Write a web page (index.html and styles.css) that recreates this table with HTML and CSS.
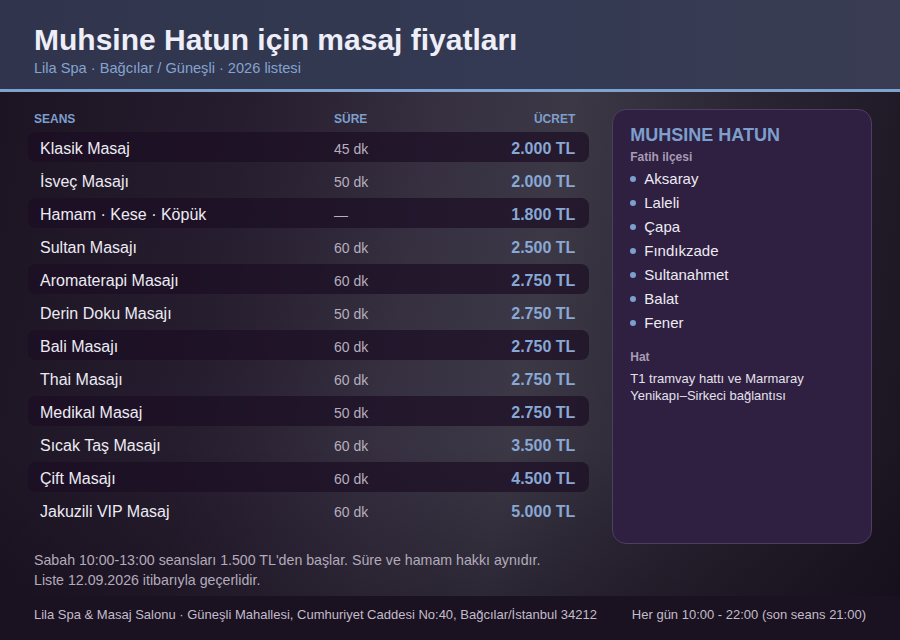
FILE: index.html
```html
<!DOCTYPE html>
<html lang="tr">
<head>
<meta charset="utf-8">
<title>Muhsine Hatun için masaj fiyatları</title>
<link rel="stylesheet" href="styles.css">
</head>
<body>
<div class="page">
  <header class="top">
    <h1 class="title">Muhsine Hatun için masaj fiyatları</h1>
    <div class="subtitle">Lila Spa · Bağcılar / Güneşli · 2026 listesi</div>
  </header>
  <main class="main">
    <div class="content">
      <section class="prices">
        <div class="thead">
          <span>SEANS</span><span>SÜRE</span><span class="r">ÜCRET</span>
        </div>
        <div class="row alt"><span class="name">Klasik Masaj</span><span class="dur">45 dk</span><span class="price">2.000 TL</span></div>
        <div class="row"><span class="name">İsveç Masajı</span><span class="dur">50 dk</span><span class="price">2.000 TL</span></div>
        <div class="row alt"><span class="name">Hamam · Kese · Köpük</span><span class="dur">—</span><span class="price">1.800 TL</span></div>
        <div class="row"><span class="name">Sultan Masajı</span><span class="dur">60 dk</span><span class="price">2.500 TL</span></div>
        <div class="row alt"><span class="name">Aromaterapi Masajı</span><span class="dur">60 dk</span><span class="price">2.750 TL</span></div>
        <div class="row"><span class="name">Derin Doku Masajı</span><span class="dur">50 dk</span><span class="price">2.750 TL</span></div>
        <div class="row alt"><span class="name">Bali Masajı</span><span class="dur">60 dk</span><span class="price">2.750 TL</span></div>
        <div class="row"><span class="name">Thai Masajı</span><span class="dur">60 dk</span><span class="price">2.750 TL</span></div>
        <div class="row alt"><span class="name">Medikal Masaj</span><span class="dur">50 dk</span><span class="price">2.750 TL</span></div>
        <div class="row"><span class="name">Sıcak Taş Masajı</span><span class="dur">60 dk</span><span class="price">3.500 TL</span></div>
        <div class="row alt"><span class="name">Çift Masajı</span><span class="dur">60 dk</span><span class="price">4.500 TL</span></div>
        <div class="row"><span class="name">Jakuzili VIP Masaj</span><span class="dur">60 dk</span><span class="price">5.000 TL</span></div>
      </section>
      <aside class="card">
        <h2 class="card-title">MUHSINE HATUN</h2>
        <div class="label">Fatih ilçesi</div>
        <ul class="places">
          <li>Aksaray</li>
          <li>Laleli</li>
          <li>Çapa</li>
          <li>Fındıkzade</li>
          <li>Sultanahmet</li>
          <li>Balat</li>
          <li>Fener</li>
        </ul>
        <div class="label hat">Hat</div>
        <p class="line">T1 tramvay hattı ve Marmaray Yenikapı–Sirkeci bağlantısı</p>
      </aside>
    </div>
    <div class="notes">
      <p>Sabah 10:00-13:00 seansları 1.500 TL'den başlar. Süre ve hamam hakkı aynıdır.</p>
      <p>Liste 12.09.2026 itibarıyla geçerlidir.</p>
    </div>
  </main>
  <footer class="foot">
    <span>Lila Spa &amp; Masaj Salonu · Güneşli Mahallesi, Cumhuriyet Caddesi No:40, Bağcılar/İstanbul 34212</span>
    <span>Her gün 10:00 - 22:00 (son seans 21:00)</span>
  </footer>
</div>
</body>
</html>
```

FILE: styles.css
```css
* { box-sizing: border-box; }
html, body { margin: 0; padding: 0; }
body {
  width: 900px;
  height: 640px;
  overflow: hidden;
  font-family: "Liberation Sans", Arial, sans-serif;
  background: #1b1322;
}
.page {
  width: 900px;
  height: 640px;
  display: flex;
  flex-direction: column;
}
.top {
  height: 92px;
  padding: 22px 34px 0;
  background: linear-gradient(90deg, #30354d 0%, #343a53 60%, #393c52 100%);
  border-bottom: 3px solid #7fa3d0;
}
.title {
  margin: 0;
  font-size: 30px;
  line-height: 36px;
  font-weight: 700;
  color: #eeeef9;
}
.subtitle {
  margin-top: 1px;
  font-size: 14.6px;
  line-height: 18px;
  color: #86a3cf;
}
.main {
  flex: 1;
  padding: 17px 28px 0;
  background:
    linear-gradient(180deg, rgba(0,0,0,0) 0%, rgba(0,0,0,0) 70%, rgba(15,8,20,0.35) 100%),
    linear-gradient(100deg, #1c1323 0%, #261d2e 25%, #363041 45%, #3c3846 58%, #2c2634 75%, #1a1320 100%);
}
.content {
  display: flex;
  gap: 23px;
  height: 435px;
}
.prices {
  width: 562px;
}
.thead {
  display: grid;
  grid-template-columns: 300px 1fr auto;
  padding: 3px 14px 6px 6px;
  font-size: 12px;
  line-height: 14px;
  font-weight: 700;
  color: #7d9fcd;
}
.thead .r { text-align: right; }
.row {
  display: grid;
  grid-template-columns: 294px 1fr auto;
  align-items: center;
  height: 30px;
  margin-bottom: 3px;
  padding: 3px 14px 0 12px;
  border-radius: 8px;
}
.row.alt { background: rgba(28, 14, 36, 0.72); }
.name {
  font-size: 16px;
  color: #ecebf3;
}
.dur {
  font-size: 14px;
  color: #b6afbe;
}
.price {
  font-size: 16px;
  font-weight: 700;
  color: #88a8d5;
  text-align: right;
}
.card {
  width: 260px;
  height: 435px;
  padding: 14px 16px 0 17px;
  background: #2f1f40;
  border: 1px solid #4c3f62;
  border-radius: 14px;
}
.card-title {
  margin: 0;
  font-size: 18px;
  line-height: 22px;
  font-weight: 700;
  color: #7d9fcd;
}
.label {
  margin-top: 3px;
  font-size: 12px;
  line-height: 16px;
  font-weight: 700;
  color: #a89bb6;
}
.places {
  list-style: none;
  margin: 1px 0 0;
  padding: 0;
}
.places li {
  display: flex;
  align-items: center;
  gap: 8px;
  height: 24px;
  font-size: 15px;
  color: #ecebf3;
}
.places li::before {
  content: "";
  width: 6px;
  height: 6px;
  border-radius: 50%;
  background: #7d9fcd;
  margin-top: 2px;
}
.label.hat { margin-top: 15px; }
.line {
  margin: 5px 0 0;
  font-size: 13px;
  line-height: 17px;
  color: #e4e1ec;
}
.notes {
  margin-top: 6px;
  padding-left: 6px;
  font-size: 14.2px;
  line-height: 20px;
  color: #b3abbb;
}
.notes p { margin: 0; }
.foot {
  height: 44px;
  display: flex;
  justify-content: space-between;
  padding: 11px 34px 0;
  background: #1a1220;
  font-size: 13px;
  line-height: 16px;
  color: #c3bccb;
}
```
